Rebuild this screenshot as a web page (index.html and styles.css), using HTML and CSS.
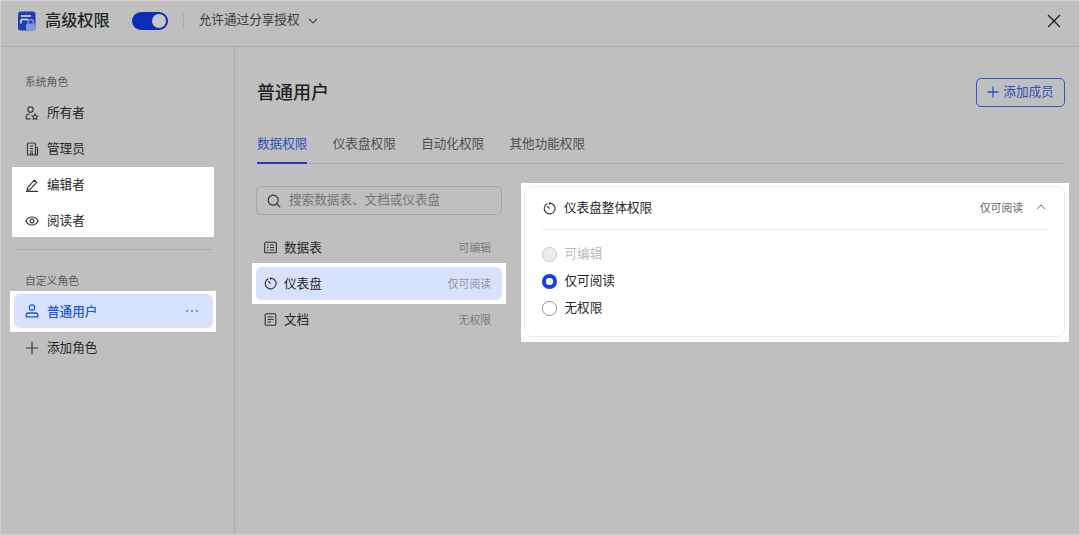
FILE: index.html
```html
<!DOCTYPE html>
<html lang="zh-CN">
<head>
<meta charset="utf-8">
<title>高级权限</title>
<link rel="stylesheet" href="styles.css">
</head>
<body>
<div class="app">
  <header class="topbar">
    <svg class="logo" viewBox="0 0 18 20">
      <rect x="0" y="0.5" width="17.5" height="19" rx="2.5" fill="#1f3fb0"/>
      <path d="M3 5h10M3 8.500h7M3 8.500v4" stroke="#e4e9f7" stroke-width="1.500" fill="none"/>
      <path d="M10 13v-1.500a2.700 2.700 0 0 1 5.400 0V13" stroke="#7f9ad6" stroke-width="1.400" fill="none"/>
      <rect x="8" y="12.500" width="9.500" height="7" rx="1.800" fill="#7f9ad6"/>
    </svg>
    <h1 class="app-title">高级权限</h1>
    <span class="toggle"><span class="knob"></span></span>
    <span class="vsep"></span>
    <span class="share">允许通过分享授权</span>
    <svg class="chev" viewBox="0 0 10 6"><path d="M1 1l4 4 4-4" fill="none" stroke="#444" stroke-width="1.200"/></svg>
    <svg class="close" viewBox="0 0 14 14"><path d="M1 1l12 12M13 1L1 13" stroke="#222" stroke-width="1.400" fill="none"/></svg>
  </header>
  <div class="body">
    <aside class="sidebar">
      <div class="side-label">系统角色</div>
      <div class="role role-first">
        <svg class="ic" viewBox="0 0 14 14"><circle cx="5.500" cy="3.600" r="2.700" fill="none" stroke="#3a3a3a" stroke-width="1.200"/><path d="M1 12.700v-1.400c0-2 1.600-3.300 3.800-3.300M1 12.800h4.500" fill="none" stroke="#3a3a3a" stroke-width="1.200"/><path d="M7.200 10.100l1.900-.3.900-1.800.9 1.800 1.900.3-1.300 1.400.2 1.900-1.700-.9-1.700.9.200-1.900z" fill="none" stroke="#3a3a3a" stroke-width="1.100"/></svg>
        <span class="role-text">所有者</span>
      </div>
      <div class="role">
        <svg class="ic" viewBox="0 0 14 14"><path d="M2.500 13V2c0-.6.400-1 1-1h6c.6 0 1 .4 1 1v11zM10.500 5.500h1.200c.5 0 .8.300.8.800V13H10.500" fill="none" stroke="#3a3a3a" stroke-width="1.200"/><path d="M5 4h3M5 6.500h3M5 9h3M5.500 13v-2h2v2" stroke="#3a3a3a" stroke-width="1.100" fill="none"/></svg>
        <span class="role-text">管理员</span>
      </div>
      <div class="spot spot-roles">
        <div class="role">
          <svg class="ic" viewBox="0 0 14 14"><path d="M2.500 9.800L9.300 2.200l2.400 2.100-6.900 7.400-2.600.3zM1 13.300h12" fill="none" stroke="#3a3a3a" stroke-width="1.200"/></svg>
          <span class="role-text">编辑者</span>
        </div>
        <div class="role">
          <svg class="ic" viewBox="0 0 14 14"><path d="M.8 7C2.300 4.300 4.400 3 7 3s4.700 1.300 6.200 4C11.700 9.700 9.600 11 7 11S2.300 9.700.8 7z" fill="none" stroke="#3a3a3a" stroke-width="1.200"/><circle cx="7" cy="7" r="1.900" fill="none" stroke="#3a3a3a" stroke-width="1.200"/></svg>
          <span class="role-text">阅读者</span>
        </div>
      </div>
      <div class="side-sep"></div>
      <div class="side-label side-label-custom">自定义角色</div>
      <div class="spot spot-user">
        <div class="role role-active">
          <svg class="ic" viewBox="0 0 14 14"><circle cx="7" cy="3.600" r="2.700" fill="none" stroke="#1456f0" stroke-width="1.300"/><path d="M1.200 12.800v-1.500c0-1.300 1-2.300 2.300-2.300h7c1.300 0 2.300 1 2.300 2.300v1.500z" fill="none" stroke="#1456f0" stroke-width="1.300"/></svg>
          <span class="role-name">普通用户</span>
          <span class="dots"><i></i><i></i><i></i></span>
        </div>
      </div>
      <div class="role role-add">
        <svg class="ic" viewBox="0 0 14 14"><path d="M7 .8v12.400M.8 7h12.400" stroke="#3a3a3a" stroke-width="1.200"/></svg>
        <span class="role-text">添加角色</span>
      </div>
    </aside>
    <main class="main">
      <div class="main-head">
        <h2 class="main-title">普通用户</h2>
        <button class="add-btn" type="button">
          <svg class="plus" viewBox="0 0 12 12"><path d="M6 .5v11M.5 6h11" stroke="#2f50bd" stroke-width="1.300"/></svg>
          <span class="add-text">添加成员</span>
        </button>
      </div>
      <nav class="tabs">
        <span class="tab tab-active">数据权限</span>
        <span class="tab">仪表盘权限</span>
        <span class="tab">自动化权限</span>
        <span class="tab">其他功能权限</span>
      </nav>
      <div class="panes">
        <section class="list">
          <div class="search">
            <svg class="search-ic" viewBox="0 0 14 14"><circle cx="6.200" cy="6.200" r="5" fill="none" stroke="#333" stroke-width="1.200"/><path d="M10 10l3.200 3.200" stroke="#333" stroke-width="1.200"/></svg>
            <span class="search-text">搜索数据表、文档或仪表盘</span>
          </div>
          <div class="item">
            <svg class="ic-s" viewBox="0 0 13 13"><rect x=".7" y="1.200" width="11.600" height="10.600" rx="1" fill="none" stroke="#333" stroke-width="1.100"/><path d="M3 4h1.500M6 4h4M3 6.500h1.500M6 6.500h4M3 9h1.500M6 9h4" stroke="#333" stroke-width="1"/></svg>
            <span class="item-name">数据表</span>
            <span class="item-perm">可编辑</span>
          </div>
          <div class="spot spot-item">
            <div class="item item-active">
              <svg class="ic-s" viewBox="0 0 14 14"><path d="M4.800 1.700A5.800 5.800 0 1 0 7 1.200V3" fill="none" stroke="#333" stroke-width="1.200"/><path d="M4.500 4.500L7 7" stroke="#333" stroke-width="1.200"/></svg>
              <span class="item-name">仪表盘</span>
              <span class="item-perm">仅可阅读</span>
            </div>
          </div>
          <div class="item">
            <svg class="ic-s" viewBox="0 0 13 13"><rect x="1.200" y=".7" width="10.600" height="11.600" rx="1.200" fill="none" stroke="#333" stroke-width="1.100"/><path d="M3.500 4h6M3.500 6.500h6M3.500 9h3.500" stroke="#333" stroke-width="1"/></svg>
            <span class="item-name">文档</span>
            <span class="item-perm">无权限</span>
          </div>
        </section>
        <section class="spot spot-card">
          <div class="card">
            <div class="card-head">
              <svg class="ic-s ic-card" viewBox="0 0 14 14"><path d="M4.800 1.700A5.800 5.800 0 1 0 7 1.200V3" fill="none" stroke="#333" stroke-width="1.200"/><path d="M4.500 4.500L7 7" stroke="#333" stroke-width="1.200"/></svg>
              <span class="card-title">仪表盘整体权限</span>
              <span class="card-perm">仅可阅读</span>
              <svg class="chev-up" viewBox="0 0 10 6"><path d="M.8 5.200L5 1l4.200 4.200" fill="none" stroke="#666" stroke-width="1"/></svg>
            </div>
            <div class="radios">
              <div class="radio-row radio-disabled"><span class="radio"></span><span class="radio-text">可编辑</span></div>
              <div class="radio-row"><span class="radio radio-on"></span><span class="radio-text">仅可阅读</span></div>
              <div class="radio-row"><span class="radio radio-off"></span><span class="radio-text">无权限</span></div>
            </div>
          </div>
        </section>
      </div>
    </main>
  </div>
</div>
</body>
</html>
```
FILE: styles.css
```css
* { box-sizing: border-box; }
html, body { margin: 0; height: 100%; }
body {
  font-family: "Noto Sans CJK SC", "Noto Sans", sans-serif;
  color: #262626;
  background: #bfbfbf;
  overflow: hidden;
}
h1, h2 { margin: 0; font-weight: 500; }
.app {
  height: 535px;
  width: 1080px;
  display: flex;
  flex-direction: column;
  border: 1px solid #d2d2d2;
  background: #bfbfbf;
}
.topbar {
  height: 46px;
  flex: none;
  display: flex;
  align-items: center;
  padding: 0 18px 6px 17px;
  border-bottom: 1px solid #adadad;
}
.logo { width: 18px; height: 20px; }
.app-title { font-size: 16.200px; line-height: 22px; margin-left: 9px; padding-bottom: 3px; font-weight: 500; color: #262626; }
.toggle {
  width: 36px; height: 18px; margin-left: 22px;
  border-radius: 9px; background: #0c2db3;
  display: flex; align-items: center; justify-content: flex-end; padding-right: 2px;
}
.knob { width: 14px; height: 14px; border-radius: 50%; background: #c8c8c8; }
.vsep { width: 1px; height: 15px; background: #adadad; margin-left: 15px; }
.share { font-size: 12.600px; line-height: 18px; margin-left: 15px; padding-bottom: 3px; color: #3c3c3c; }
.chev { width: 10px; height: 6px; margin-left: 8px; }
.close { width: 14px; height: 14px; margin-left: auto; }

.body { flex: 1; display: flex; min-height: 0; }
.sidebar {
  width: 234px;
  flex: none;
  border-right: 1px solid #adadad;
  padding: 26px 21px 0 13px;
}
.side-label { font-size: 10.800px; line-height: 16px; color: #5c5c5c; padding-left: 11px; }
.role {
  height: 36px;
  display: flex;
  align-items: center;
  gap: 8px;
  padding-left: 11px;
  font-size: 12.600px;
  color: #262626;
}
.role-text { padding-bottom: 3px; }
.role-first { margin-top: 6px; }
.ic { width: 14px; height: 14px; flex: none; }
.spot { background: #fff; }
.spot-roles { margin: 0 -1px 0 -2px; padding-left: 2px; height: 70px; overflow: hidden; }
.side-sep { height: 1px; background: #adadad; margin-top: 12px; }
.side-label-custom { margin-top: 22px; margin-bottom: 1px; }
.spot-user { margin: 3px -3px 0 -4px; padding: 3px 3px 4px 4px; }
.role-active {
  height: 34px;
  background: #d8e2fd;
  border-radius: 6px;
  color: #1456f0;
  font-weight: 500;
  padding-right: 15px;
}
.role-name { flex: 1; padding-bottom: 1px; }
.dots { display: flex; gap: 3px; }
.dots i { width: 2px; height: 2px; border-radius: 50%; background: #7b7b7b; }
.role-add { margin-top: -2px; }

.main { flex: 1; min-width: 0; padding: 31px 14px 0 22px; }
.main-head { display: flex; align-items: center; justify-content: space-between; height: 28px; }
.main-title { font-size: 18px; line-height: 26px; font-weight: 500; color: #222; margin-top: -2px; }
.add-btn {
  width: 89px; height: 29px;
  border: 1px solid #3556c4;
  border-radius: 5px;
  background: transparent;
  font: inherit;
  font-size: 12.600px;
  color: #2f50bd;
  display: flex; align-items: center; justify-content: center; gap: 4px;
  padding: 0;
}
.add-text { padding-bottom: 3px; }
.plus { width: 12px; height: 12px; flex: none; }
.tabs {
  display: flex;
  gap: 25.400px;
  margin-top: 27px;
  height: 31px;
  border-bottom: 1px solid #adadad;
  font-size: 12.600px;
  color: #4f4f4f;
}
.tab { line-height: 19px; height: 31px; }
.tab-active { color: #2d50bf; border-bottom: 2px solid #1c3db8; }

.panes { display: flex; align-items: flex-start; gap: 19px; margin-top: 19px; }
.list { width: 246px; margin-left: -1px; margin-top: 3px; flex: none; }
.search {
  height: 29px;
  border: 1px solid #a6a6a6;
  border-radius: 5px;
  display: flex; align-items: center; gap: 7px;
  padding-left: 10px;
  font-size: 12.600px;
  color: #767676;
  margin-bottom: 14px;
}
.search-text { padding-bottom: 4px; margin-left: 1px; }
.search-ic { width: 14px; height: 14px; flex: none; }
.item {
  height: 36px;
  display: flex; align-items: center;
  padding: 0 11px 0 8px;
  font-size: 12.600px;
  color: #262626;
}
.ic-s { width: 13px; height: 13px; flex: none; margin-right: 7px; }
.item-name { flex: 1; padding-bottom: 2px; }
.item-perm { font-size: 10.800px; color: #7a7a7a; padding-bottom: 1px; }
.spot-item { margin: -2px -4px -3px; padding: 4px; }
.item-active { height: 33px; background: #d8e2fd; border-radius: 6px; }
.item-active .item-perm { color: #8f939c; }

.spot-card { flex: 1; min-width: 0; padding: 3px 4px 5px 3px; margin-right: -4px; }
.card {
  height: 151px;
  border: 1px solid #ececec;
  border-radius: 8px;
  padding: 0 17px;
}
.card-head {
  height: 43px;
  display: flex; align-items: center;
  border-bottom: 1px solid #e8e8e8;
}
.ic-card { margin: 0 8px 0 1px; }
.card-title { flex: 1; font-size: 12.600px; color: #262626; padding-bottom: 3px; }
.card-perm { font-size: 10.800px; color: #666; padding-bottom: 2px; }
.chev-up { width: 10px; height: 6px; margin: -2px 1px 0 13px; }
.radios { padding-top: 11px; }
.radio-row {
  height: 27px;
  display: flex; align-items: center; gap: 8px;
  font-size: 12.600px;
  color: #262626;
}
.radio-text { padding-bottom: 5px; }
.radio { width: 14.500px; height: 14.500px; border-radius: 50%; flex: none; }
.radio-disabled { color: #b9bbbe; }
.radio-disabled .radio { background: #ebecee; border: 1px solid #c4c6c9; }
.radio-on { background: #fff; border: 4px solid #1242e6; }
.radio-off { background: #fff; border: 1px solid #8c8f94; }
```
